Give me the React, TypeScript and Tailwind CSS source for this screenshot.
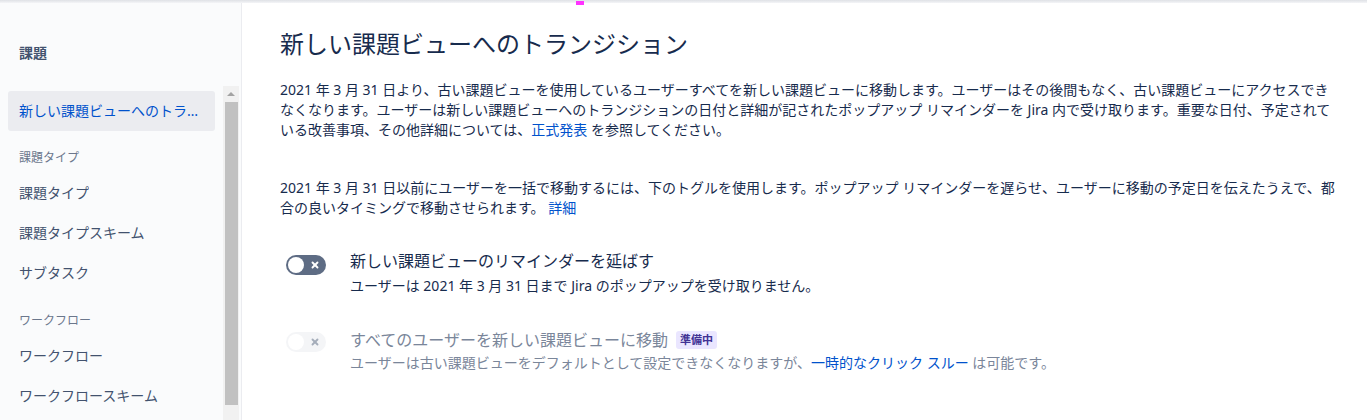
import { X } from 'lucide-react';

const font = { fontFamily: '"Noto Sans", "Noto Sans CJK JP", sans-serif' };

function SideItem({ label, active = false }: { label: string; active?: boolean }) {
    return (
        <div
            className={
                active
                    ? 'h-10 flex items-center px-[11px] rounded-[3px] bg-[#ebecf0] text-[#0052cc] text-sm'
                    : 'h-10 flex items-center px-[11px] text-[#42526e] text-sm'
            }
        >
            <span className="truncate">{label}</span>
        </div>
    );
}

function SideHeader({ label, className = '' }: { label: string; className?: string }) {
    return <div className={`h-5 leading-5 px-[11px] text-xs text-[#6b778c] ${className}`}>{label}</div>;
}

function Toggle({ disabled = false }: { disabled?: boolean }) {
    return (
        <div
            className={
                disabled
                    ? 'w-10 h-5 rounded-full bg-[#f4f5f7] flex items-center justify-between pl-[2px] pr-[6px]'
                    : 'w-10 h-5 rounded-full bg-[#5e6c84] flex items-center justify-between pl-[2px] pr-[6px]'
            }
        >
            <span className="w-4 h-4 rounded-full bg-white" />
            <X size={10} strokeWidth={4.5} className={disabled ? 'text-[#a5adba]' : 'text-white'} />
        </div>
    );
}

function Sidebar() {
    return (
        <aside className="w-[242px] shrink-0 bg-[#fafbfc] border-r border-[#ebecf0] flex flex-col">
            <div className="h-[83px] flex items-center pl-[19px] pt-[16px]">
                <h2 className="text-sm font-semibold text-[#42526e]">課題</h2>
            </div>
            <div className="flex flex-1 min-h-0">
                <nav className="w-[223px] pl-2 pr-[8px] pt-[5px]">
                    <SideItem label="新しい課題ビューへのトランジション" active />
                    <SideHeader label="課題タイプ" className="mt-[17px] mb-[5px]" />
                    <SideItem label="課題タイプ" />
                    <SideItem label="課題タイプスキーム" />
                    <SideItem label="サブタスク" />
                    <SideHeader label="ワークフロー" className="mt-[18px] mb-[5px]" />
                    <SideItem label="ワークフロー" />
                    <SideItem label="ワークフロースキーム" />
                </nav>
                {/* scrollbar */}
                <div className="w-[16px] bg-[#f1f1f1] flex flex-col items-center">
                    <div className="h-4 w-full flex items-center justify-center">
                        <span className="w-0 h-0 border-l-[4px] border-r-[4px] border-b-[4px] border-l-transparent border-r-transparent border-b-[#a3a3a3]" />
                    </div>
                    <div className="w-[13px] h-[303px] bg-[#c1c1c1]" />
                </div>
            </div>
        </aside>
    );
}

export default function App() {
    return (
        <div className="relative w-full h-[420px] overflow-hidden bg-white text-[#172b4d]" style={font}>
            <div className="h-[3px] bg-gradient-to-b from-[#dfe1e6] to-[#f4f5f7]" />
            <div className="absolute left-[576px] top-[1px] w-[8px] h-[4px] bg-[#ff33ff]" />
            <div className="flex h-[417px]">
                <Sidebar />
                <main className="flex-1 pl-[38px] pt-[25px]">
                    <div className="max-w-[1062px]">
                        <h1 className="text-2xl leading-8 text-[#172b4d]">新しい課題ビューへのトランジション</h1>
                        <p className="mt-5 text-sm leading-5">
                            2021 年 3 月 31 日より、古い課題ビューを使用しているユーザーすべてを新しい課題ビューに移動します。ユーザーはその後間もなく、古い課題ビューにアクセスできなくなります。ユーザーは新しい課題ビューへのトランジションの日付と詳細が記されたポップアップ リマインダーを Jira 内で受け取ります。重要な日付、予定されている改善事項、その他詳細については、
                            <a className="text-[#0052cc]">正式発表</a> を参照してください。
                        </p>
                        <p className="mt-[38px] text-sm leading-5">
                            2021 年 3 月 31 日以前にユーザーを一括で移動するには、下のトグルを使用します。ポップアップ リマインダーを遅らせ、ユーザーに移動の予定日を伝えたうえで、都合の良いタイミングで移動させられます。 <a className="text-[#0052cc]">詳細</a>
                        </p>

                        <div className="mt-[31px] flex gap-6 pl-[6px]">
                            <div className="pt-[6px]">
                                <Toggle />
                            </div>
                            <div>
                                <div className="text-base leading-6">新しい課題ビューのリマインダーを延ばす</div>
                                <div className="mt-[3px] text-sm leading-5">ユーザーは 2021 年 3 月 31 日まで Jira のポップアップを受け取りません。</div>
                            </div>
                        </div>

                        <div className="mt-[32px] flex gap-6 pl-[6px]">
                            <div className="pt-[4px]">
                                <Toggle disabled />
                            </div>
                            <div>
                                <div className="flex items-center gap-2 text-base leading-6 text-[#7a869a]">
                                    <span>すべてのユーザーを新しい課題ビューに移動</span>
                                    <span className="px-[4px] h-[18px] leading-[18px] rounded-[3px] bg-[#eae6ff] text-[#403294] text-[11px] font-bold">準備中</span>
                                </div>
                                <div className="mt-[1px] text-sm leading-5 text-[#7a869a]">
                                    ユーザーは古い課題ビューをデフォルトとして設定できなくなりますが、<a className="text-[#0052cc]">一時的なクリック スルー</a> は可能です。
                                </div>
                            </div>
                        </div>
                    </div>
                </main>
            </div>
        </div>
    );
}
